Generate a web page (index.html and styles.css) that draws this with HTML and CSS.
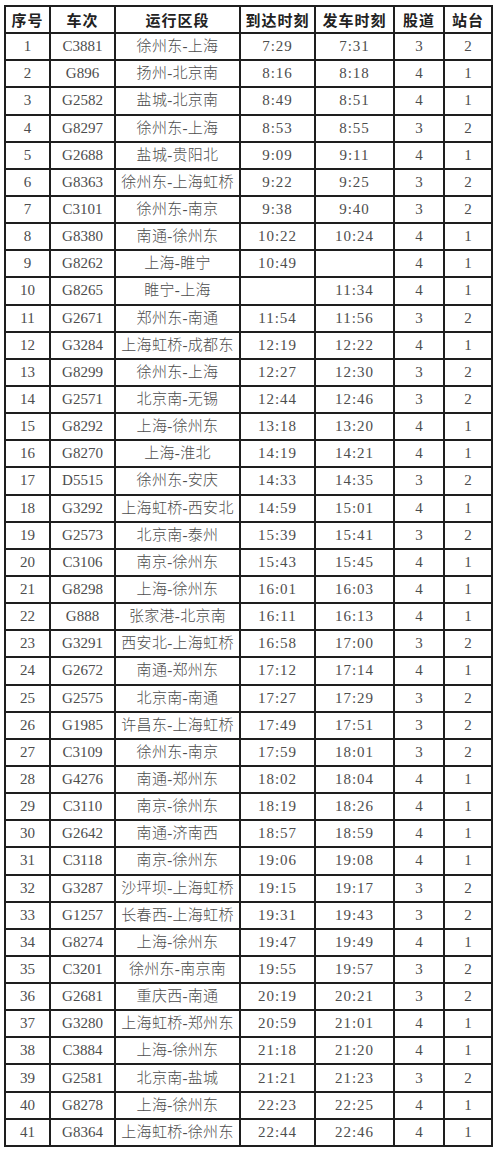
FILE: index.html
```html
<!DOCTYPE html>
<html lang="zh-CN">
<head>
<meta charset="utf-8">
<title>列车时刻表</title>
<link rel="stylesheet" href="styles.css">
</head>
<body>
<table class="tt">
<colgroup>
<col class="c1"><col class="c2"><col class="c3"><col class="c4"><col class="c5"><col class="c6"><col class="c7">
</colgroup>
<thead>
<tr><th>序号</th><th>车次</th><th>运行区段</th><th>到达时刻</th><th>发车时刻</th><th>股道</th><th>站台</th></tr>
</thead>
<tbody id="rows">
<tr><td>1</td><td>C3881</td><td class="zh">徐州东-上海</td><td class="t">7:29</td><td class="t">7:31</td><td>3</td><td>2</td></tr>
<tr><td>2</td><td>G896</td><td class="zh">扬州-北京南</td><td class="t">8:16</td><td class="t">8:18</td><td>4</td><td>1</td></tr>
<tr><td>3</td><td>G2582</td><td class="zh">盐城-北京南</td><td class="t">8:49</td><td class="t">8:51</td><td>4</td><td>1</td></tr>
<tr><td>4</td><td>G8297</td><td class="zh">徐州东-上海</td><td class="t">8:53</td><td class="t">8:55</td><td>3</td><td>2</td></tr>
<tr><td>5</td><td>G2688</td><td class="zh">盐城-贵阳北</td><td class="t">9:09</td><td class="t">9:11</td><td>4</td><td>1</td></tr>
<tr><td>6</td><td>G8363</td><td class="zh">徐州东-上海虹桥</td><td class="t">9:22</td><td class="t">9:25</td><td>3</td><td>2</td></tr>
<tr><td>7</td><td>C3101</td><td class="zh">徐州东-南京</td><td class="t">9:38</td><td class="t">9:40</td><td>3</td><td>2</td></tr>
<tr><td>8</td><td>G8380</td><td class="zh">南通-徐州东</td><td class="t">10:22</td><td class="t">10:24</td><td>4</td><td>1</td></tr>
<tr><td>9</td><td>G8262</td><td class="zh">上海-睢宁</td><td class="t">10:49</td><td class="t"></td><td>4</td><td>1</td></tr>
<tr><td>10</td><td>G8265</td><td class="zh">睢宁-上海</td><td class="t"></td><td class="t">11:34</td><td>4</td><td>1</td></tr>
<tr><td>11</td><td>G2671</td><td class="zh">郑州东-南通</td><td class="t">11:54</td><td class="t">11:56</td><td>3</td><td>2</td></tr>
<tr><td>12</td><td>G3284</td><td class="zh">上海虹桥-成都东</td><td class="t">12:19</td><td class="t">12:22</td><td>4</td><td>1</td></tr>
<tr><td>13</td><td>G8299</td><td class="zh">徐州东-上海</td><td class="t">12:27</td><td class="t">12:30</td><td>3</td><td>2</td></tr>
<tr><td>14</td><td>G2571</td><td class="zh">北京南-无锡</td><td class="t">12:44</td><td class="t">12:46</td><td>3</td><td>2</td></tr>
<tr><td>15</td><td>G8292</td><td class="zh">上海-徐州东</td><td class="t">13:18</td><td class="t">13:20</td><td>4</td><td>1</td></tr>
<tr><td>16</td><td>G8270</td><td class="zh">上海-淮北</td><td class="t">14:19</td><td class="t">14:21</td><td>4</td><td>1</td></tr>
<tr><td>17</td><td>D5515</td><td class="zh">徐州东-安庆</td><td class="t">14:33</td><td class="t">14:35</td><td>3</td><td>2</td></tr>
<tr><td>18</td><td>G3292</td><td class="zh">上海虹桥-西安北</td><td class="t">14:59</td><td class="t">15:01</td><td>4</td><td>1</td></tr>
<tr><td>19</td><td>G2573</td><td class="zh">北京南-泰州</td><td class="t">15:39</td><td class="t">15:41</td><td>3</td><td>2</td></tr>
<tr><td>20</td><td>C3106</td><td class="zh">南京-徐州东</td><td class="t">15:43</td><td class="t">15:45</td><td>4</td><td>1</td></tr>
<tr><td>21</td><td>G8298</td><td class="zh">上海-徐州东</td><td class="t">16:01</td><td class="t">16:03</td><td>4</td><td>1</td></tr>
<tr><td>22</td><td>G888</td><td class="zh">张家港-北京南</td><td class="t">16:11</td><td class="t">16:13</td><td>4</td><td>1</td></tr>
<tr><td>23</td><td>G3291</td><td class="zh">西安北-上海虹桥</td><td class="t">16:58</td><td class="t">17:00</td><td>3</td><td>2</td></tr>
<tr><td>24</td><td>G2672</td><td class="zh">南通-郑州东</td><td class="t">17:12</td><td class="t">17:14</td><td>4</td><td>1</td></tr>
<tr><td>25</td><td>G2575</td><td class="zh">北京南-南通</td><td class="t">17:27</td><td class="t">17:29</td><td>3</td><td>2</td></tr>
<tr><td>26</td><td>G1985</td><td class="zh">许昌东-上海虹桥</td><td class="t">17:49</td><td class="t">17:51</td><td>3</td><td>2</td></tr>
<tr><td>27</td><td>C3109</td><td class="zh">徐州东-南京</td><td class="t">17:59</td><td class="t">18:01</td><td>3</td><td>2</td></tr>
<tr><td>28</td><td>G4276</td><td class="zh">南通-郑州东</td><td class="t">18:02</td><td class="t">18:04</td><td>4</td><td>1</td></tr>
<tr><td>29</td><td>C3110</td><td class="zh">南京-徐州东</td><td class="t">18:19</td><td class="t">18:26</td><td>4</td><td>1</td></tr>
<tr><td>30</td><td>G2642</td><td class="zh">南通-济南西</td><td class="t">18:57</td><td class="t">18:59</td><td>4</td><td>1</td></tr>
<tr><td>31</td><td>C3118</td><td class="zh">南京-徐州东</td><td class="t">19:06</td><td class="t">19:08</td><td>4</td><td>1</td></tr>
<tr><td>32</td><td>G3287</td><td class="zh">沙坪坝-上海虹桥</td><td class="t">19:15</td><td class="t">19:17</td><td>3</td><td>2</td></tr>
<tr><td>33</td><td>G1257</td><td class="zh">长春西-上海虹桥</td><td class="t">19:31</td><td class="t">19:43</td><td>3</td><td>2</td></tr>
<tr><td>34</td><td>G8274</td><td class="zh">上海-徐州东</td><td class="t">19:47</td><td class="t">19:49</td><td>4</td><td>1</td></tr>
<tr><td>35</td><td>C3201</td><td class="zh">徐州东-南京南</td><td class="t">19:55</td><td class="t">19:57</td><td>3</td><td>2</td></tr>
<tr><td>36</td><td>G2681</td><td class="zh">重庆西-南通</td><td class="t">20:19</td><td class="t">20:21</td><td>3</td><td>2</td></tr>
<tr><td>37</td><td>G3280</td><td class="zh">上海虹桥-郑州东</td><td class="t">20:59</td><td class="t">21:01</td><td>4</td><td>1</td></tr>
<tr><td>38</td><td>C3884</td><td class="zh">上海-徐州东</td><td class="t">21:18</td><td class="t">21:20</td><td>4</td><td>1</td></tr>
<tr><td>39</td><td>G2581</td><td class="zh">北京南-盐城</td><td class="t">21:21</td><td class="t">21:23</td><td>3</td><td>2</td></tr>
<tr><td>40</td><td>G8278</td><td class="zh">上海-徐州东</td><td class="t">22:23</td><td class="t">22:25</td><td>4</td><td>1</td></tr>
<tr><td>41</td><td>G8364</td><td class="zh">上海虹桥-徐州东</td><td class="t">22:44</td><td class="t">22:46</td><td>4</td><td>1</td></tr>
</tbody>
</table>
</body>
</html>
```
FILE: styles.css
```css
html, body {
  margin: 0;
  padding: 0;
  background: #ffffff;
}
body {
  padding: 5px 0 0 4px;
}
.tt {
  border-collapse: collapse;
  table-layout: fixed;
  width: 489px;
  border: 2px solid #1e1e1e;
  font-family: "Liberation Serif", "Noto Sans CJK SC", serif;
  font-size: 15px;
  color: #4d4d4d;
}
.c1 { width: 45px; }
.c2 { width: 65px; }
.c3 { width: 125px; }
.c4 { width: 75px; }
.c5 { width: 79px; }
.c6 { width: 50px; }
.c7 { width: 48px; }
.tt th,
.tt td {
  border: 2px solid #1e1e1e;
  height: 25.15px;
  padding: 0;
  text-align: center;
  vertical-align: middle;
  line-height: 1;
  white-space: nowrap;
}
.tt th {
  font-family: "Noto Sans CJK SC", sans-serif;
  font-weight: 700;
  font-size: 15px;
  color: #222222;
  letter-spacing: 1px;
}
.tt td.zh {
  font-family: "Liberation Serif", "Noto Sans CJK SC", serif;
  font-weight: 300;
  font-size: 15px;
  letter-spacing: 0.3px;
}
.tt td.t {
  letter-spacing: 1px;
}
```
